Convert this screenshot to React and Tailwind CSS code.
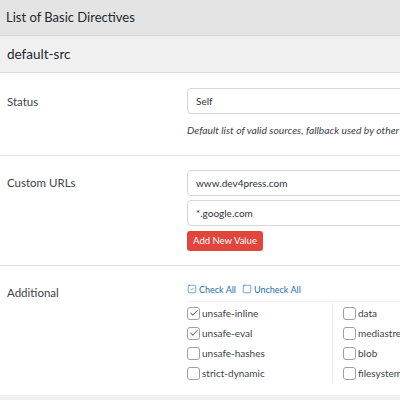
import { Check, SquareCheck, Square } from 'lucide-react';

const font = { fontFamily: 'Lato, "Noto Sans", sans-serif' };

const Box = ({ checked }) => (
  <span className="w-[13px] h-[13px] rounded-[3px] border border-[#a0a0a0] bg-white flex items-center justify-center shrink-0">
    {checked && <Check className="w-[10px] h-[10px] text-[#707070]" strokeWidth={2.5} />}
  </span>
);

const Item = ({ label, checked }) => (
  <label className="flex items-center gap-[2px] h-[20px] text-[10px] text-[#3c434a] whitespace-nowrap">
    <Box checked={checked} />
    <span>{label}</span>
  </label>
);

const TextInput = ({ value }) => (
  <div className="h-[26px] w-[240px] border border-[#d6d6d6] rounded-[4px] bg-white flex items-center px-[8px] text-[10px] text-[#2c3338]">
    {value}
  </div>
);

export default function App() {
  return (
    <div className="w-[400px] h-[400px] overflow-hidden bg-white" style={font}>
      <div className="h-[36px] bg-[#e4e4e4] border-b border-[#d4d4d4] flex items-center px-[6px] text-[13px] text-[#23282d]">
        List of Basic Directives
      </div>
      <div className="h-[37px] bg-[#f0f0f0] border-b border-[#dcdcdc] flex items-center px-[7px] text-[13.5px] text-[#23282d]">
        default-src
      </div>

      <div className="flex border-b border-[#e2e2e2] pt-[15px] pb-[17px]">
        <div className="w-[187px] shrink-0 pl-[7px] pt-[5px] text-[11.5px] text-[#3c434a]">Status</div>
        <div className="flex flex-col whitespace-nowrap">
          <TextInput value="Self" />
          <p className="mt-[9px] text-[10.3px] italic text-[#3c434a]">
            Default list of valid sources, fallback used by other directives
          </p>
        </div>
      </div>

      <div className="flex border-b border-[#e2e2e2] pt-[14px] pb-[14px]">
        <div className="w-[187px] shrink-0 pl-[7px] pt-[4px] text-[11.5px] text-[#3c434a]">Custom URLs</div>
        <div className="flex flex-col gap-[4px]">
          <TextInput value="www.dev4press.com" />
          <TextInput value="*.google.com" />
          <button className="mt-[1px] w-[76px] h-[20px] rounded-[3px] bg-[#e0463c] text-white text-[9.5px] whitespace-nowrap flex items-center justify-center">
            Add New Value
          </button>
        </div>
      </div>

      <div className="flex pt-[16px] pb-[12px]">
        <div className="w-[187px] shrink-0 pl-[7px] pt-[2px] text-[11.5px] text-[#3c434a]">Additional</div>
        <div className="flex flex-col flex-1">
          <div className="flex items-center gap-[6px] h-[14px] text-[9px] text-[#2271b1]">
            <span className="flex items-center gap-[2px]">
              <SquareCheck className="w-[10px] h-[10px]" strokeWidth={1.5} />
              Check All
            </span>
            <span className="flex items-center gap-[2px]">
              <Square className="w-[10px] h-[10px]" strokeWidth={1.5} />
              Uncheck All
            </span>
          </div>
          <div className="mt-[5px] border-t border-[#f0f0f0] pt-[1px] flex">
            <div className="w-[146px] flex flex-col border-r border-[#e6e6e6]">
              <Item label="unsafe-inline" checked />
              <Item label="unsafe-eval" checked />
              <Item label="unsafe-hashes" />
              <Item label="strict-dynamic" />
            </div>
            <div className="pl-[10px] flex flex-col">
              <Item label="data" />
              <Item label="mediastream:" />
              <Item label="blob" />
              <Item label="filesystem" />
            </div>
          </div>
        </div>
      </div>
      <div className="h-[20px] bg-[#f0f0f0]" />
    </div>
  );
}
